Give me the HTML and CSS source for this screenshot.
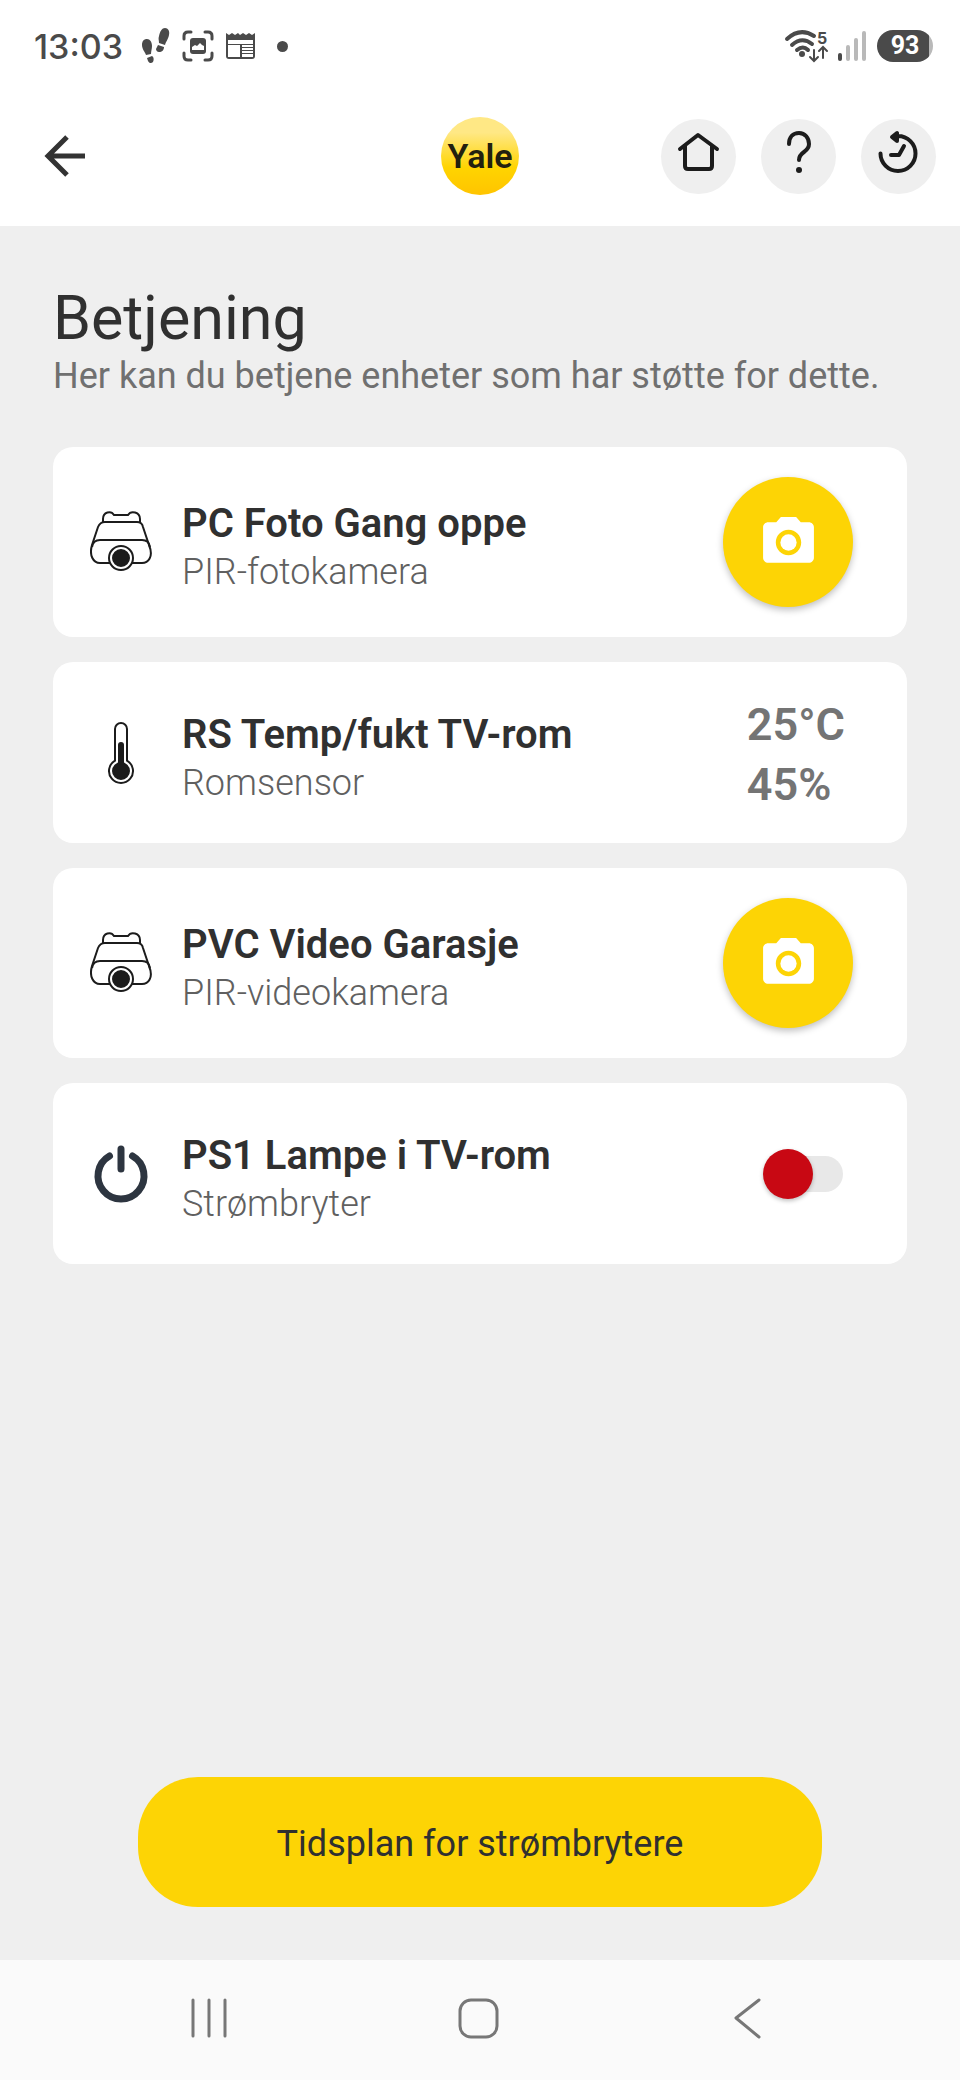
FILE: index.html
```html
<!DOCTYPE html>
<html lang="no">
<head>
    <meta charset="utf-8">
    <meta name="viewport" content="width=device-width, initial-scale=1">
    <title>Betjening</title>
    <link rel="stylesheet" href="styles.css">
</head>
<body>
    <div class="status-bar">
        <span class="clock">13:03</span>
        <div class="status-icons">
            <svg width="29" height="36" viewBox="0 0 29 36" fill="#4a4a4a">
                <path d="M1 17c0-4 2-6 5-6s5 3 5 7c0 3-1 5-1 8l-5 1c-1-3-4-6-4-10z"/>
                <path d="M6 30l5-2c2 1 2 4 1 6-2 2-4 1-5-1z"/>
                <path d="M18 8c1-5 3-8 6-8s5 3 4 7c-1 5-3 6-4 10l-6-2c0-3-1-4 0-7z"/>
                <path d="M17 17l6 2c0 3-2 5-5 5-2 0-3-2-3-3z"/>
            </svg>
            <svg width="32" height="32" viewBox="0 0 32 32">
                <path d="M2 9V6q0-4 4-4h3M23 2h3q4 0 4 4v3M30 23v3q0 4-4 4h-3M9 30H6q-4 0-4-4v-3" fill="none" stroke="#4a4a4a" stroke-width="3" stroke-linecap="round"/>
                <rect x="8" y="8" width="16" height="16" rx="3" fill="#4a4a4a"/>
                <path d="M10 20v-3l3-2 2 1 3-3 2 2 2 1v4z" fill="#fff"/>
            </svg>
            <svg width="29" height="28" viewBox="0 0 29 28">
                <path d="M0 1l3 2 3-2 3 2 3-2 2 2 3-2 3 2 3-2 3 2 3-2v23q0 3-3 3H3q-3 0-3-3z" fill="#4a4a4a"/>
                <path d="M2 8h25v4H2zM2 13h12v12H2zM16 13h11v2H16zM16 16h11v2H16zM16 19h11v2H16zM16 22h11v3H16z" fill="#fff"/>
            </svg>
            <span class="dot"></span>
        </div>
        <div class="status-right">
            <svg width="43" height="32" viewBox="0 0 43 32" fill="none" stroke="#4a4a4a" stroke-width="4" stroke-linecap="round">
                <path d="M2 9q13-12 27-3M7 15q10-9 20-1M12 20q6-5 11 0"/>
                <circle cx="17" cy="24" r="3" fill="#4a4a4a" stroke="none"/>
                <path d="M29 20v10M25 27l4 4 4-4M38 28V18M34 21l4-4 4 4" stroke-width="2"/>
                <text class="wifi-band" x="32" y="14">5</text>
            </svg>
            <svg width="29" height="32" viewBox="0 0 29 32">
                <rect x="0" y="23" width="4" height="8" rx="2" fill="#4a4a4a"/>
                <path d="M10 17v12M18 10v19M26 3v26" stroke="#b9b9b9" stroke-width="4" stroke-linecap="round"/>
            </svg>
            <span class="battery">93</span>
        </div>
    </div>

    <header class="top-bar">
        <button class="back" type="button" aria-label="Tilbake">
            <svg width="42" height="42" viewBox="0 0 42 42" fill="none" stroke="#333" stroke-width="5">
                <path d="M41 21H4M23 2L4 21l19 19"/>
            </svg>
        </button>
        <div class="logo">Yale</div>
        <nav class="actions">
            <a class="round" href="#" aria-label="Hjem">
                <svg viewBox="0 0 75 75"><path d="M19 30l18-14 19 14M24 27v20q0 3 3 3h21q3 0 3-3V27"/></svg>
            </a>
            <a class="round" href="#" aria-label="Hjelp">
                <svg viewBox="0 0 75 75"><path d="M28 25c0-7 4-11 10-11s10 5 10 11c0 9-10 7-10 16"/><circle cx="38" cy="51" r="3"/></svg>
            </a>
            <a class="round" href="#" aria-label="Historikk">
                <svg viewBox="0 0 75 75"><path d="M19.500 34.500A17.500 17.500 0 1 0 37 17M30 36h8l5-9M36 14v8l-5-4z"/></svg>
            </a>
        </nav>
    </header>

    <main class="content">
        <h1>Betjening</h1>
        <p class="intro">Her kan du betjene enheter som har støtte for dette.</p>

        <ul class="devices">
            <li class="card">
                <svg class="device-icon" viewBox="0 0 62 62"><use href="#pir"/></svg>
                <div class="device">
                    <h2>PC Foto Gang oppe</h2>
                    <p>PIR-fotokamera</p>
                </div>
                <button class="snap" type="button" aria-label="Ta bilde med PC Foto Gang oppe">
                    <svg viewBox="0 0 24 24"><use href="#photo"/></svg>
                </button>
            </li>
            <li class="card">
                <svg class="device-icon" viewBox="0 0 62 62" fill="none" stroke="#1c1c1c" stroke-width="2">
                    <path d="M25 38.600V7a6 6 0 0 1 12 0v31.600A12 12 0 1 1 25 38.600z"/>
                    <path d="M31 23v24" stroke-width="6" stroke-linecap="round"/>
                    <circle cx="31" cy="49" r="8" fill="#1c1c1c"/>
                </svg>
                <div class="device">
                    <h2>RS Temp/fukt TV-rom</h2>
                    <p>Romsensor</p>
                </div>
                <div class="reading">25°C<br>45%</div>
            </li>
            <li class="card">
                <svg class="device-icon" viewBox="0 0 62 62"><use href="#pir"/></svg>
                <div class="device">
                    <h2>PVC Video Garasje</h2>
                    <p>PIR-videokamera</p>
                </div>
                <button class="snap" type="button" aria-label="Ta bilde med PVC Video Garasje">
                    <svg viewBox="0 0 24 24"><use href="#photo"/></svg>
                </button>
            </li>
            <li class="card">
                <svg class="device-icon" viewBox="0 0 62 62" fill="none" stroke="#2d3540" stroke-width="7" stroke-linecap="round">
                    <path d="M19.500 13a23 23 0 1 0 23 0M31 6v20"/>
                </svg>
                <div class="device">
                    <h2><label for="ps1">PS1 Lampe i TV-rom</label></h2>
                    <p>Strømbryter</p>
                </div>
                <input class="switch" id="ps1" type="checkbox" role="switch">
            </li>
        </ul>

        <button class="schedule" type="button">Tidsplan for strømbrytere</button>
    </main>

    <nav class="system-nav">
        <button type="button" aria-label="Siste apper">
            <svg viewBox="0 0 44 44"><path d="M5 4v36M21 4v36M37 4v36"/></svg>
        </button>
        <button type="button" aria-label="Startskjerm">
            <svg viewBox="0 0 44 44"><rect x="3" y="4" width="37" height="37" rx="11"/></svg>
        </button>
        <button type="button" aria-label="Tilbake">
            <svg viewBox="0 0 44 44"><path d="M33 4L10 22l23 19"/></svg>
        </button>
    </nav>

    <!-- shared icons -->
    <svg width="0" height="0" class="sprites">
        <symbol id="pir" viewBox="0 0 62 62">
            <g fill="none" stroke="#1c1c1c" stroke-width="2">
                <path d="M13 11V8c0-7 8-9 11-4h14c3-5 12-3 12 4v3"/>
                <path d="M15 11h32q5 0 6 5l6 18c5 12-1 18-7 18H10c-7 0-11-8-8-18L8 16q2-5 7-5z"/>
                <path d="M2 36q1-7 8-7h42q7 0 8 7"/>
                <circle cx="31" cy="47" r="12" fill="#fff"/>
                <circle cx="31" cy="47" r="8" fill="#1c1c1c"/>
            </g>
        </symbol>
        <symbol id="photo" viewBox="0 0 24 24">
            <circle cx="12" cy="12" r="3.200"/>
            <path d="M9 2L7.170 4H4c-1.100 0-2 .9-2 2v12c0 1.100.9 2 2 2h16c1.100 0 2-.9 2-2V6c0-1.100-.9-2-2-2h-3.170L15 2H9zm3 15c-2.760 0-5-2.240-5-5s2.240-5 5-5 5 2.240 5 5-2.240 5-5 5z"/>
        </symbol>
    </svg>
</body>
</html>
```
FILE: styles.css
```css
* {
    box-sizing: border-box;
}

body {
    margin: 0;
    min-height: 100vh;
    display: flex;
    flex-direction: column;
    font-family: Roboto, sans-serif;
    color: #303030;
    background: #efefef;
}

h1, h2, p, ul {
    margin: 0;
    padding: 0;
}

button {
    border: 0;
    padding: 0;
    background: none;
    font-family: inherit;
    color: inherit;
    cursor: pointer;
}

svg {
    display: block;
}

/* status bar */
.status-bar {
    display: flex;
    align-items: center;
    height: 92px;
    padding: 0 27px 0 34px;
    background: #fff;
    color: #4a4a4a;
}

.clock {
    font-family: Inter, sans-serif;
    font-size: 34px;
    font-weight: 500;
}

.status-icons {
    display: flex;
    align-items: center;
    gap: 12px;
    margin-left: 18px;
}

.dot {
    width: 11px;
    height: 11px;
    margin-left: 10px;
    border-radius: 50%;
    background: #4a4a4a;
}

.status-right {
    display: flex;
    align-items: center;
    gap: 10px;
    margin-left: auto;
}

.status-right svg {
    overflow: visible;
}

.wifi-band {
    font-family: Inter, sans-serif;
    font-size: 16px;
    font-weight: 700;
    fill: #4a4a4a;
    stroke: none;
}

.battery {
    width: 56px;
    border-radius: 16px;
    background: linear-gradient(to right, #4a4a4a 93%, #b9b9b9 93%);
    color: #fff;
    font-size: 25px;
    font-weight: 700;
    line-height: 32px;
    text-align: center;
}

/* app bar */
.top-bar {
    display: grid;
    grid-template-columns: 1fr auto 1fr;
    align-items: center;
    height: 134px;
    padding: 0 24px 6px;
    background: #fff;
}

.back {
    justify-self: start;
    margin-left: 20px;
}

.logo {
    width: 78px;
    border-radius: 50%;
    background: linear-gradient(#ffe885 20%, #ffd400 65%, #ffc400);
    color: #22200f;
    font-size: 34px;
    font-weight: 600;
    line-height: 78px;
    text-align: center;
}

.actions {
    display: flex;
    justify-content: flex-end;
    gap: 25px;
}

.round {
    width: 75px;
    height: 75px;
    border-radius: 50%;
    background: #efefef;
}

.round svg {
    fill: none;
    stroke: #1c1c1c;
    stroke-width: 4;
    stroke-linecap: round;
    stroke-linejoin: round;
}

.round circle {
    fill: #1c1c1c;
    stroke: none;
}

/* device list */
.content {
    flex: 1;
    display: flex;
    flex-direction: column;
    padding: 56px 53px 53px;
}

h1 {
    font-size: 61px;
    font-weight: 400;
    line-height: 72px;
}

.intro {
    font-size: 36px;
    line-height: 44px;
    color: #707070;
}

.devices {
    display: flex;
    flex-direction: column;
    gap: 25px;
    margin-top: 49px;
    list-style: none;
}

.card {
    display: flex;
    align-items: center;
    gap: 30px;
    min-height: 181px;
    padding: 26px 54px 26px 37px;
    border-radius: 20px;
    background: #fff;
}

.device-icon {
    width: 62px;
    height: 62px;
    flex: none;
}

.device {
    flex: 1;
    padding-top: 12px;
}

.device h2 {
    font-size: 40px;
    font-weight: 600;
    line-height: 48px;
}

.device p {
    font-size: 36px;
    font-weight: 300;
    line-height: 48px;
    color: #606060;
}

.snap {
    display: grid;
    place-items: center;
    width: 130px;
    height: 130px;
    margin: 4px 0;
    border-radius: 50%;
    background: #fdd405;
    box-shadow: 0 3px 7px rgba(0, 0, 0, 0.25);
}

.snap svg {
    width: 61px;
    fill: #fff;
}

.reading {
    margin-right: 8px;
    padding-top: 4px;
    font-size: 45px;
    font-weight: 600;
    line-height: 60px;
    color: #747474;
}

.switch {
    appearance: none;
    display: flex;
    align-items: center;
    width: 70px;
    height: 36px;
    margin: 0 10px 0 0;
    border-radius: 18px;
    background: #e8e8e8;
    cursor: pointer;
}

.switch::before {
    content: "";
    flex: none;
    width: 50px;
    height: 50px;
    margin-left: -10px;
    border-radius: 50%;
    background: #c80813;
    box-shadow: 0 2px 4px rgba(0, 0, 0, 0.25);
}

.switch:checked::before {
    margin-left: 30px;
    background: #2e9e4f;
}

.schedule {
    width: 80%;
    height: 130px;
    margin: auto auto 0;
    padding-top: 4px;
    border-radius: 60px;
    background: #fdd405;
    font-size: 36px;
}

/* system navigation */
.system-nav {
    display: flex;
    justify-content: space-between;
    align-items: center;
    height: 120px;
    padding: 0 190px 4px 188px;
    background: #fafafa;
}

.system-nav svg {
    width: 44px;
    height: 44px;
    fill: none;
    stroke: #777;
    stroke-width: 3;
    stroke-linecap: round;
    stroke-linejoin: round;
}

.sprites {
    position: absolute;
}
```
